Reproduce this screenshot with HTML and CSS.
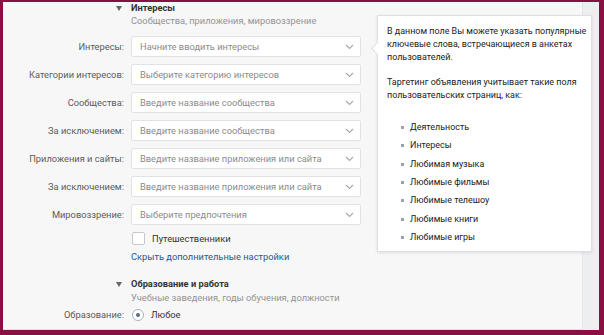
FILE: index.html
```html
<!DOCTYPE html>
<html lang="ru">
<head>
    <meta charset="UTF-8">
    <title>Таргетинг - Интересы</title>
    <link rel="stylesheet" href="styles.css">
</head>
<body>
    <div class="frame">
        <div class="main">
            <div class="section-head">
                <span class="toggle"></span>
                <div>
                    <div class="section-title">Интересы</div>
                    <div class="section-sub">Сообщества, приложения, мировоззрение</div>
                </div>
            </div>

            <div class="form">
                <label>Интересы:</label>
                <div class="select">Начните вводить интересы<svg width="9" height="6" viewBox="0 0 9 6"><polyline points="1,1 4.5,4.5 8,1"/></svg></div>

                <label>Категории интересов:</label>
                <div class="select">Выберите категорию интересов<svg width="9" height="6" viewBox="0 0 9 6"><polyline points="1,1 4.5,4.5 8,1"/></svg></div>

                <label>Сообщества:</label>
                <div class="select">Введите название сообщества<svg width="9" height="6" viewBox="0 0 9 6"><polyline points="1,1 4.5,4.5 8,1"/></svg></div>

                <label>За исключением:</label>
                <div class="select">Введите название сообщества<svg width="9" height="6" viewBox="0 0 9 6"><polyline points="1,1 4.5,4.5 8,1"/></svg></div>

                <label>Приложения и сайты:</label>
                <div class="select">Введите название приложения или сайта<svg width="9" height="6" viewBox="0 0 9 6"><polyline points="1,1 4.5,4.5 8,1"/></svg></div>

                <label>За исключением:</label>
                <div class="select">Введите название приложения или сайта<svg width="9" height="6" viewBox="0 0 9 6"><polyline points="1,1 4.5,4.5 8,1"/></svg></div>

                <label>Мировоззрение:</label>
                <div class="select">Выберите предпочтения<svg width="9" height="6" viewBox="0 0 9 6"><polyline points="1,1 4.5,4.5 8,1"/></svg></div>

                <span></span>
                <div class="check"><span class="box"></span>Путешественники</div>

                <span></span>
                <a class="more" href="#">Скрыть дополнительные настройки</a>
            </div>

            <div class="section-head second">
                <span class="toggle"></span>
                <div>
                    <div class="section-title">Образование и работа</div>
                    <div class="section-sub">Учебные заведения, годы обучения, должности</div>
                </div>
            </div>

            <div class="form edu">
                <label>Образование:</label>
                <div class="check"><span class="radio"></span>Любое</div>
            </div>

            <!-- подсказка к полю "Интересы" -->
            <div class="tooltip">
                <p>В данном поле Вы можете указать популярные ключевые слова, встречающиеся в анкетах пользователей.</p>
                <p>Таргетинг объявления учитывает такие поля пользовательских страниц, как:</p>
                <ul>
                    <li>Деятельность</li>
                    <li>Интересы</li>
                    <li>Любимая музыка</li>
                    <li>Любимые фильмы</li>
                    <li>Любимые телешоу</li>
                    <li>Любимые книги</li>
                    <li>Любимые игры</li>
                </ul>
            </div>
        </div>
        <div class="side-strip"></div>
    </div>
</body>
</html>
```

FILE: styles.css
```css
body {
    margin: 0;
    font-family: Roboto, "Liberation Sans", sans-serif;
    font-size: 9.3px;
    color: #222;
}
.frame {
    display: flex;
    width: 604px;
    height: 335px;
    box-sizing: border-box;
    border-style: solid;
    border-color: #8a1043;
    border-width: 2px 5px 5px 3px;
    background-color: #f7f7f8;
    overflow: hidden;
}
.main {
    flex: 1;
    position: relative;
    border-bottom: 1px solid #f2d7e2;
}
.side-strip {
    width: 16px;
    background-color: #eceef0;
    border-left: 1px solid #e4e6e9;
}

.section-head {
    display: grid;
    grid-template-columns: 121px 1fr;
    column-gap: 7px;
}
.section-head.second {
    margin-top: 15px;
}
.toggle {
    justify-self: end;
    margin: 4px 2px 0 0;
    width: 0;
    height: 0;
    border-left: 3px solid transparent;
    border-right: 3px solid transparent;
    border-top: 5px solid #666;
}
.section-title {
    font-weight: 700;
    line-height: 12px;
    color: #333;
}
.section-sub {
    margin-top: 1px;
    line-height: 12px;
    color: #939393;
}
.second .section-sub {
    margin-top: 2px;
}

.form {
    display: grid;
    grid-template-columns: 121px 230px;
    column-gap: 7px;
    row-gap: 7px;
    align-items: center;
    margin-top: 9px;
}
.form label {
    text-align: right;
    white-space: nowrap;
    color: #5b5b5b;
}
.select {
    display: flex;
    justify-content: space-between;
    align-items: center;
    height: 21px;
    box-sizing: border-box;
    padding: 0 6px 0 8px;
    background-color: #fff;
    border: 1px solid #dfe2e7;
    border-radius: 2px;
    color: #8b8b8b;
    white-space: nowrap;
}
.select svg {
    fill: none;
    stroke: #a3a8ae;
    stroke-width: 1.1;
}
.check {
    display: flex;
    align-items: center;
    height: 13px;
    color: #333;
}
.form .check:first-of-type {
    margin-top: 3px;
}
.box {
    width: 11px;
    height: 11px;
    margin: 0 7px 0 1px;
    background-color: #fff;
    border: 1px solid #c3c8cf;
    border-radius: 2px;
}
.more {
    margin-top: -1px;
    line-height: 12px;
    color: #2a5885;
    text-decoration: none;
}
.form.edu {
    margin-top: 4px;
}
.edu .check:first-of-type {
    margin-top: 0;
}
.radio {
    position: relative;
    width: 10px;
    height: 10px;
    margin: 0 7px 0 1px;
    background-color: #fff;
    border: 1px solid #a9b3be;
    border-radius: 50%;
}
.radio::after {
    content: "";
    position: absolute;
    left: 3px;
    top: 3px;
    width: 4px;
    height: 4px;
    border-radius: 50%;
    background-color: #5a6d82;
}

.tooltip {
    position: absolute;
    left: 374px;
    top: 13px;
    width: 215px;
    height: 237px;
    box-sizing: border-box;
    padding: 9px 1px 0 9px;
    background-color: #fff;
    border: 1px solid #dcdfe3;
    box-shadow: 0 1px 3px rgba(0, 0, 0, 0.1);
    font-size: 8.95px;
    line-height: 12.8px;
    color: #222;
}
.tooltip::before {
    content: "";
    position: absolute;
    left: -5px;
    top: 28px;
    width: 8px;
    height: 8px;
    background-color: #fff;
    border-left: 1px solid #dcdfe3;
    border-bottom: 1px solid #dcdfe3;
    transform: rotate(45deg);
}
.tooltip p {
    margin: 0 0 12.8px 0;
}
.tooltip ul {
    margin: 16px 0 0 0;
    padding: 0 0 0 23px;
    list-style: none;
}
.tooltip li {
    position: relative;
    line-height: 18.4px;
}
.tooltip li::before {
    content: "";
    position: absolute;
    left: -9px;
    top: 8px;
    width: 3px;
    height: 3px;
    background-color: #9aa3ad;
}
```
